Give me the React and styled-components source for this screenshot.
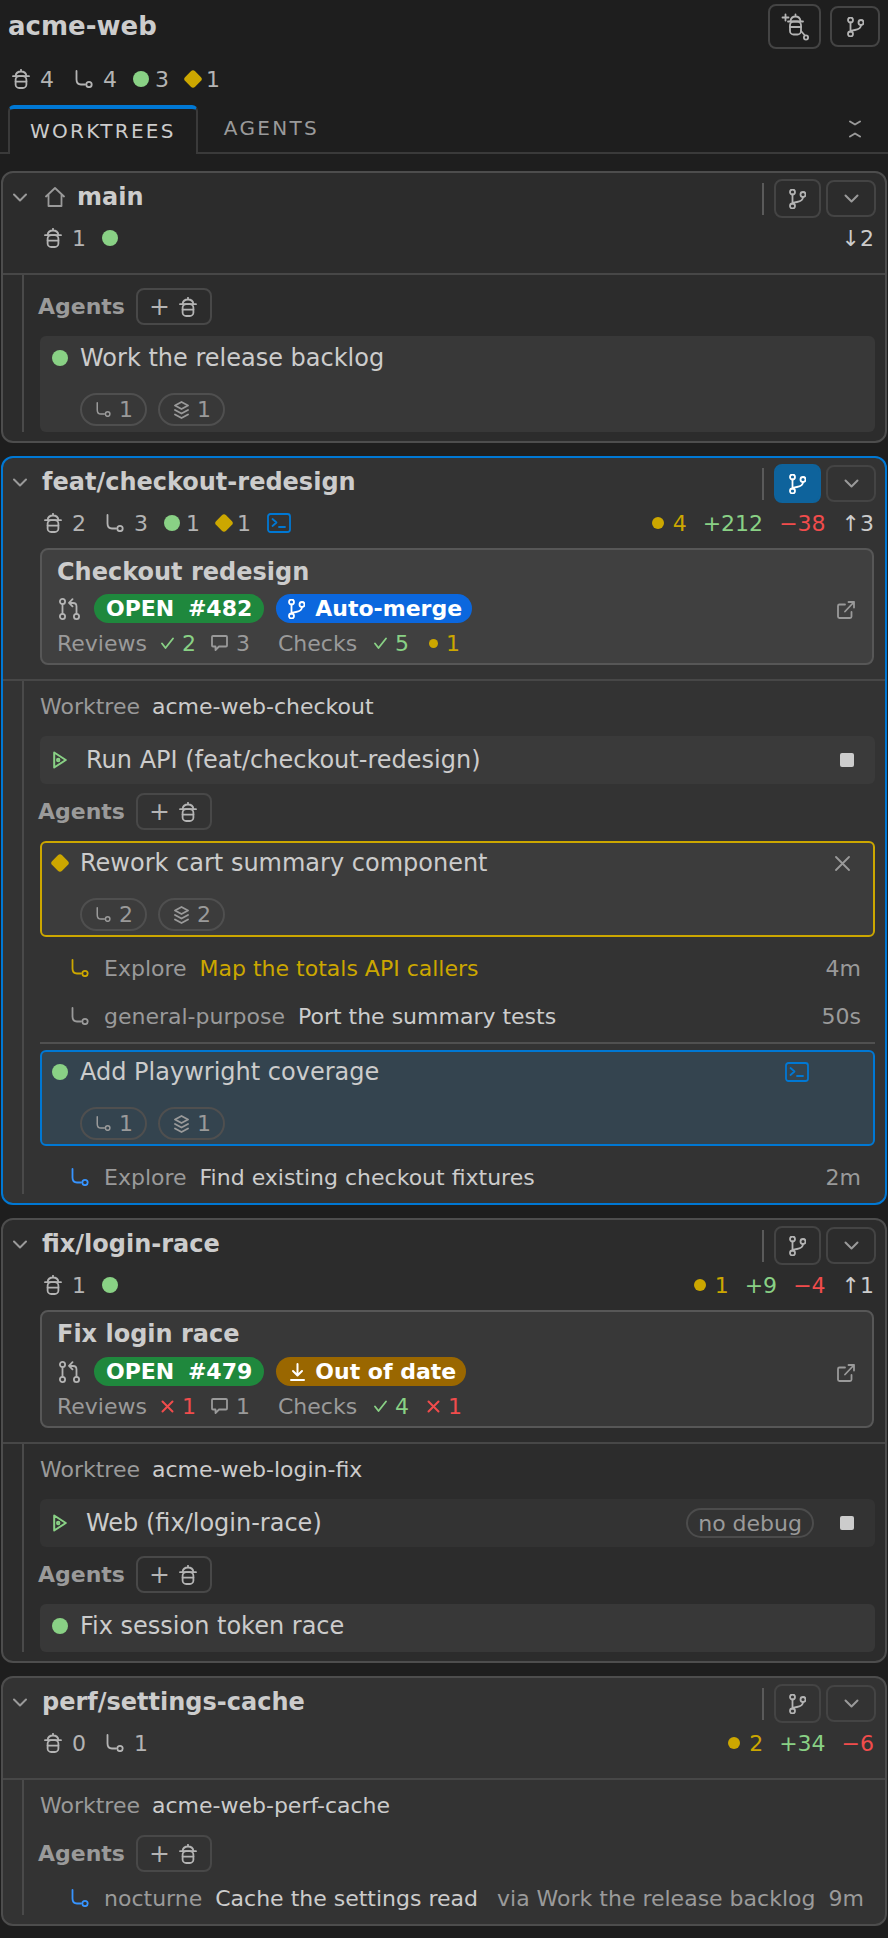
import React from 'react';
import styled, { createGlobalStyle } from 'styled-components';

const colors = {
  text: '#cccccc',
  soft: '#b4b4b4',
  muted: '#9a9a9a',
  green: '#89d185',
  yellow: '#cca700',
  red: '#f14c4c',
  blue: '#0078d4',
  link: '#3794ff',
  white: '#ffffff',
};

const GlobalStyle = createGlobalStyle`
  html, body {
    margin: 0;
    padding: 0;
    background: #1e1e1e;
  }
  body {
    color: #cccccc;
    font-family: "DejaVu Sans", sans-serif;
    font-size: 22px;
  }
  * {
    box-sizing: border-box;
  }
`;

const Glyph = styled.svg`
  display: block;
  flex: none;
  color: ${(p) => colors[p.$tone] || colors.soft};
  fill: none;
  stroke: currentColor;
  stroke-width: ${(p) => p.$weight || 1.8};
  stroke-linecap: round;
  stroke-linejoin: round;
`;

const AgentIcon = ({ tone }) => (
  <Glyph $tone={tone} width="18" height="20" viewBox="0 0 18 20">
    <path d="M9 .8v1.600M3.600 6.800C4 4 6 2.500 9 2.500s5 1.500 5.400 4.300M1 7.200h16" />
    <rect x="3.600" y="7.200" width="10.800" height="11.800" rx="3.600" />
    <path d="M3.600 12.600h10.800" />
  </Glyph>
);

const AddAgentIcon = () => (
  <Glyph width="28" height="28" viewBox="0 0 28 28">
    <path d="M4.500 1.500v6M1.500 4.500h6" />
    <path d="M14.500 1.500v2M9.500 8c.4-2.800 2.200-4.500 5-4.500s4.600 1.700 5 4.500M7 8.500h15" />
    <rect x="9" y="8.500" width="11" height="13" rx="3.600" />
    <path d="M9 14h11M20 18l3.500 4" />
    <circle cx="25" cy="24.500" r="2.100" />
  </Glyph>
);

const SubagentIcon = ({ tone, size = 18 }) => (
  <Glyph $tone={tone} width={size} height={size} viewBox="0 0 18 18">
    <path d="M1.500 1v8.500c0 3 1.800 5 4.500 5h4" />
    <circle cx="14" cy="14.500" r="2.700" />
  </Glyph>
);

const BranchIcon = ({ tone, size = 20 }) => (
  <Glyph $tone={tone} width={(size * 17) / 20} height={size} viewBox="0 0 17 20">
    <circle cx="3.500" cy="3" r="2.500" />
    <circle cx="3.500" cy="17" r="2.500" />
    <circle cx="14" cy="5.500" r="2.500" />
    <path d="M3.500 5.500v9M14 8c0 3.500-3 4.500-6 5-2.500.4-4.500 1-4.500 1.500" />
  </Glyph>
);

const PullRequestIcon = () => (
  <Glyph width="21" height="22" viewBox="0 0 21 22">
    <circle cx="3.500" cy="3.500" r="2.600" />
    <circle cx="3.500" cy="18.500" r="2.600" />
    <circle cx="17.500" cy="18.500" r="2.600" />
    <path d="M3.500 6.100v9.800M17.500 15.900V8.500c0-2.500-1.500-3.500-3.500-3.500h-3M13.500 1.200 10 4.800l3.500 3.600" />
  </Glyph>
);

const LayersIcon = () => (
  <Glyph $tone="muted" width="15" height="18" viewBox="0 0 15 18">
    <path d="M7.500 1 14 4.500 7.500 8 1 4.500zM1 9l6.500 3.500L14 9M1 13.500 7.500 17l6.500-3.500" />
  </Glyph>
);

const HomeIcon = () => (
  <Glyph $tone="muted" width="20" height="20" viewBox="0 0 20 20">
    <path d="M1 9.500 10 1l9 8.500M3.500 8v11h13V8" />
  </Glyph>
);

const TerminalIcon = () => (
  <Glyph $tone="blue" width="24" height="20" viewBox="0 0 24 20">
    <rect x="1" y="1" width="22" height="18" rx="2.500" />
    <path d="m5.500 6 4 3.500-4 3.500M12 14h6" />
  </Glyph>
);

const ExternalIcon = () => (
  <OffsetSlot>
    <Glyph $tone="muted" width="18" height="18" viewBox="0 0 18 18">
      <path d="M8 3.500H2.500a1.500 1.500 0 0 0-1.500 1.500v10.500A1.500 1.500 0 0 0 2.500 17H13a1.500 1.500 0 0 0 1.500-1.500V11M8 10.500 17 1M11.500 1H17v5.500" />
    </Glyph>
  </OffsetSlot>
);

const PlayIcon = () => (
  <Glyph $tone="green" $weight="2" width="14" height="18" viewBox="0 0 14 18">
    <path d="M1.200 1.500 12.800 9 1.200 16.500z" />
    <circle cx="5.200" cy="9" r="1.200" />
  </Glyph>
);

const CloseIcon = () => (
  <Glyph $tone="muted" width="15" height="15" viewBox="0 0 15 15">
    <path d="m1 1 13 13M14 1 1 14" />
  </Glyph>
);

const ChevronIcon = ({ width = 14 }) => (
  <Glyph $tone="muted" $weight="2" width={width} height="9" viewBox="0 0 14 9">
    <path d="m1 1.500 6 6 6-6" />
  </Glyph>
);

const FoldIcon = () => (
  <Glyph $tone="muted" $weight="2" width="12" height="18" viewBox="0 0 12 18">
    <path d="m1 1.500 5 3 5-3M1 16.500l5-3 5 3" />
  </Glyph>
);

const CheckIcon = () => (
  <Glyph $tone="green" width="13" height="12" viewBox="0 0 13 12">
    <path d="m1 6.500 3.500 4.500L12 1.500" />
  </Glyph>
);

const CrossIcon = () => (
  <Glyph $tone="red" $weight="2" width="13" height="13" viewBox="0 0 13 13">
    <path d="m1.500 1.500 10 10M11.500 1.500l-10 10" />
  </Glyph>
);

const CommentIcon = () => (
  <Glyph $tone="muted" width="17" height="16" viewBox="0 0 17 16">
    <path d="M2 1h13a1 1 0 0 1 1 1v8.500a1 1 0 0 1-1 1H8l-3.500 3.500v-3.500H2a1 1 0 0 1-1-1V2a1 1 0 0 1 1-1z" />
  </Glyph>
);

const DownloadIcon = () => (
  <Glyph $tone="white" $weight="2" width="15" height="18" viewBox="0 0 15 18">
    <path d="M7.500 1v11M3 8l4.500 4.500L12 8M1 17h13" />
  </Glyph>
);

const OffsetSlot = styled.span`
  display: flex;
  flex: none;
  margin-top: 7px;
`;

const Page = styled.div`
  width: 888px;
  height: 1938px;
  overflow: hidden;
`;

const TopBar = styled.div`
  display: flex;
  align-items: center;
  justify-content: space-between;
  height: 53px;
  padding: 0 8px;
`;

const RepoName = styled.h1`
  margin: 0 0 2px;
  font-size: 26px;
  font-weight: 700;
  color: ${colors.text};
`;

const ButtonGroup = styled.div`
  display: flex;
  align-items: center;
  gap: ${(p) => p.$gap || 5}px;
`;

const IconButton = styled.button`
  display: flex;
  align-items: center;
  justify-content: center;
  width: ${(p) => p.$w}px;
  height: ${(p) => p.$h}px;
  padding: 0;
  border: 2px solid ${(p) => (p.$active ? '#0e639c' : '#444444')};
  border-radius: 8px;
  background: ${(p) => (p.$active ? '#0e639c' : 'transparent')};
`;

const StatRow = styled.div`
  display: flex;
  align-items: center;
  gap: 16px;
  height: ${(p) => p.$h || 34}px;
  padding-left: ${(p) => p.$left || 0}px;
  color: ${colors.soft};
`;

const Stat = styled.span`
  display: inline-flex;
  align-items: center;
  gap: ${(p) => p.$gap || 10}px;
  margin-left: ${(p) => p.$offset || 0}px;
  color: ${(p) => colors[p.$tone] || 'inherit'};
`;

const Dot = styled.span`
  display: block;
  flex: none;
  width: ${(p) => p.$size || 16}px;
  height: ${(p) => p.$size || 16}px;
  border-radius: 50%;
  background: ${(p) => colors[p.$tone] || colors.green};
`;

const Diamond = styled.span`
  display: block;
  flex: none;
  width: 14px;
  height: 14px;
  margin: 0 1px;
  border-radius: 3px;
  background: ${colors.yellow};
  transform: rotate(45deg);
`;

const Tabs = styled.div`
  display: flex;
  align-items: stretch;
  height: 49px;
  padding-left: 8px;
  padding-right: 27px;
  border-bottom: 2px solid #3a3a3a;
`;

const Tab = styled.div`
  display: flex;
  align-items: center;
  padding: ${(p) => (p.$active ? '0 20px 2px 20px' : '0 26px 2px')};
  margin-bottom: ${(p) => (p.$active ? -2 : 0)}px;
  font-size: 20px;
  letter-spacing: 2.3px;
  color: ${(p) => (p.$active ? colors.text : colors.muted)};
  background: #1e1e1e;
  ${(p) =>
    p.$active &&
    `
    border: 2px solid #3a3a3a;
    border-top: 4px solid ${colors.blue};
    border-bottom: 0;
    border-radius: 6px 6px 0 0;
  `}
`;

const TabSpacer = styled.div`
  display: flex;
  flex: 1;
  align-items: center;
  justify-content: flex-end;
`;

const WorktreeList = styled.div`
  display: flex;
  flex-direction: column;
  gap: 13px;
  padding: 17px 1px 0;
`;

const Worktree = styled.section`
  border: 2px solid ${(p) => (p.$selected ? colors.blue : '#4d4d4d')};
  border-radius: 12px;
  background: ${(p) => (p.$raised ? '#333333' : '#2c2c2c')};
`;

const Head = styled.div`
  padding: 3px 9px 14px 0;
`;

const HeadRow = styled.div`
  display: flex;
  align-items: center;
  height: 42px;
  margin-bottom: 3px;
  padding-left: 10px;
`;

const Branch = styled.h2`
  display: flex;
  flex: 1;
  align-items: center;
  gap: 12px;
  margin: 0 0 0 ${(p) => (p.$home ? 18 : 15)}px;
  font-size: 24px;
  font-weight: 700;
  color: ${colors.text};
`;

const HeadRule = styled.span`
  width: 2px;
  height: 32px;
  margin-top: 3px;
  margin-right: 10px;
  background: #5a5a5a;
`;

const HeadActions = styled(ButtonGroup)`
  margin-top: 3px;
`;

const MetaRow = styled.div`
  display: flex;
  align-items: center;
  justify-content: space-between;
  margin-bottom: 4px;
  padding-right: 2px;
`;

const Changes = styled(StatRow)`
  gap: 16px;
  color: ${colors.text};
`;

const PrBox = styled.div`
  display: flex;
  align-items: center;
  height: ${(p) => p.$h || 117}px;
  margin: 8px 2px 0 37px;
  padding: 0 17px 0 15px;
  border: 2px solid #575757;
  border-radius: 8px;
  background: ${(p) => (p.$raised ? '#404040' : '#383838')};
`;

const PrMain = styled.div`
  display: flex;
  flex: 1;
  flex-direction: column;
  align-self: flex-start;
  padding-top: 6px;
`;

const PrTitle = styled.div`
  font-size: 24px;
  font-weight: 700;
  line-height: 32px;
  color: ${colors.text};
`;

const BadgeRow = styled.div`
  display: flex;
  align-items: center;
  gap: 12px;
  margin-top: ${(p) => (p.$tall ? 7 : 6)}px;
  padding-left: 2px;
`;

const PrIconSlot = styled.span`
  display: flex;
  margin-right: 2px;
`;

const Badge = styled.span`
  display: inline-flex;
  align-items: center;
  gap: 10px;
  height: 29px;
  padding: 0 ${(p) => (p.$left ? 10 : 12)}px 0 ${(p) => p.$left || 12}px;
  border-radius: 15px;
  font-size: 22px;
  font-weight: 700;
  word-spacing: ${(p) => p.$words || 0}px;
  color: #ffffff;
  background: ${(p) => p.$bg};
`;

const ReviewRow = styled.div`
  display: flex;
  align-items: center;
  height: 30px;
  margin-top: 5px;
  color: ${colors.muted};
`;

const ReviewGroup = styled.div`
  display: flex;
  align-items: center;
  gap: 8px;
  margin-right: ${(p) => p.$after || 0}px;
`;

const Body = styled.div`
  padding: 0 10px 9px 0;
  border-top: 2px solid #474747;
`;

const Section = styled.div`
  display: flex;
  flex-direction: column;
  margin-left: 19px;
  padding-top: 13px;
  padding-left: 16px;
  border-left: 2px solid #4a4a4a;
`;

const WorktreePath = styled.div`
  display: flex;
  align-items: center;
  gap: 12px;
  height: 24px;
  margin-bottom: 18px;
  color: ${colors.text};
`;

const Muted = styled.span`
  white-space: nowrap;
  color: ${colors.muted};
`;

const Via = styled(Muted)`
  margin-left: 6px;
`;

const RunRow = styled.div`
  display: flex;
  align-items: center;
  height: 48px;
  margin-bottom: 9px;
  padding: 0 21px 0 13px;
  border-radius: 6px;
  font-size: 24px;
  color: ${colors.text};
  background: ${(p) => (p.$raised ? '#3a3a3a' : '#333333')};
`;

const RunName = styled.span`
  flex: 1;
  margin-left: 19px;
`;

const StopSquare = styled.span`
  width: 14px;
  height: 14px;
  border-radius: 2px;
  background: #cccccc;
`;

const Tag = styled.span`
  display: flex;
  align-items: center;
  height: 30px;
  margin-right: 26px;
  padding: 0 10px;
  border: 2px solid #4c4c4c;
  border-radius: 15px;
  font-size: 22px;
  color: ${colors.muted};
`;

const AgentsBar = styled.div`
  display: flex;
  align-items: center;
  gap: 11px;
  height: 37px;
  margin-bottom: 11px;
  margin-left: -2px;
`;

const AgentsLabel = styled.span`
  font-weight: 700;
  color: ${colors.muted};
`;

const AddButton = styled.button`
  display: flex;
  align-items: center;
  gap: 9px;
  width: 76px;
  height: 37px;
  padding: 0 0 0 11px;
  border: 2px solid #484848;
  border-radius: 8px;
  font-family: inherit;
  font-size: 25px;
  font-weight: 400;
  line-height: 1;
  color: ${colors.soft};
  background: transparent;
`;

const AgentCard = styled.div`
  padding: 0 10px 4px 10px;
  border: 2px solid ${(p) => (p.$state === 'waiting' ? colors.yellow : p.$state === 'focused' ? colors.blue : 'transparent')};
  border-radius: 6px;
  background: ${(p) => (p.$state === 'focused' ? '#34444f' : p.$state === 'waiting' ? '#3c3c3c' : '#383838')};
`;

const AgentTitle = styled.div`
  display: flex;
  align-items: center;
  gap: 12px;
  height: 40px;
  font-size: 24px;
  color: ${colors.text};
`;

const AgentName = styled.span`
  flex: 1;
`;

const CardAction = styled.span`
  display: flex;
  margin-right: ${(p) => p.$right}px;
`;

const PillRow = styled.div`
  display: flex;
  gap: 11px;
  margin-top: 15px;
  padding-left: 28px;
`;

const Pill = styled.span`
  display: inline-flex;
  align-items: center;
  gap: 8px;
  height: 33px;
  padding: 0 12px 0 14px;
  border: 2px solid #4f4f4f;
  border-radius: 17px;
  color: ${colors.muted};
`;

const SubList = styled.div`
  display: flex;
  flex-direction: column;
  gap: 18px;
  ${AgentCard} + & {
    margin-top: 16px;
  }
  &:last-child {
    margin-bottom: 2px;
  }
`;

const SubRow = styled.div`
  display: flex;
  align-items: center;
  gap: 13px;
  height: 30px;
  padding: 0 14px 0 31px;
  white-space: nowrap;
  color: ${colors.text};
  svg {
    margin-right: 2px;
  }
`;

const SubTitle = styled.span`
  color: ${(p) => colors[p.$tone] || colors.text};
`;

const SubTime = styled.span`
  margin-left: auto;
  color: ${colors.muted};
`;

const CardRule = styled.div`
  height: 2px;
  margin: 11px 0 6px;
  background: #505050;
`;

const AgentsHeader = () => (
  <AgentsBar>
    <AgentsLabel>Agents</AgentsLabel>
    <AddButton>
      +
      <AgentIcon />
    </AddButton>
  </AgentsBar>
);

const HeadButtons = ({ active }) => (
  <>
    <HeadRule />
    <HeadActions>
      <IconButton $w={47} $h={39} $active={active}>
        <BranchIcon tone={active ? 'white' : 'soft'} />
      </IconButton>
      <IconButton $w={50} $h={37}>
        <ChevronIcon width={15} />
      </IconButton>
    </HeadActions>
  </>
);

const AgentPills = ({ subagents, layers }) => (
  <PillRow>
    <Pill>
      <SubagentIcon tone="muted" size={15} />
      {subagents}
    </Pill>
    <Pill>
      <LayersIcon />
      {layers}
    </Pill>
  </PillRow>
);

const App = () => (
  <Page>
    <GlobalStyle />
    <TopBar>
      <RepoName>acme-web</RepoName>
      <ButtonGroup $gap={9}>
        <IconButton $w={53} $h={45}>
          <AddAgentIcon />
        </IconButton>
        <IconButton $w={50} $h={41}>
          <BranchIcon />
        </IconButton>
      </ButtonGroup>
    </TopBar>
    <StatRow $h={52} $left={12}>
      <Stat><AgentIcon />4</Stat>
      <Stat $offset={5}><SubagentIcon />4</Stat>
      <Stat $gap={6}><Dot />3</Stat>
      <Stat $gap={5}><Diamond />1</Stat>
    </StatRow>
    <Tabs>
      <Tab $active>WORKTREES</Tab>
      <Tab>AGENTS</Tab>
      <TabSpacer><FoldIcon /></TabSpacer>
    </Tabs>

    <WorktreeList>
      <Worktree>
        <Head>
          <HeadRow>
            <ChevronIcon />
            <Branch $home><HomeIcon />main</Branch>
            <HeadButtons />
          </HeadRow>
          <MetaRow>
            <StatRow $left={41}>
              <Stat><AgentIcon />1</Stat>
              <Dot />
            </StatRow>
            <Changes>
              <Stat $gap={0}>↓2</Stat>
            </Changes>
          </MetaRow>
        </Head>
        <Body>
          <Section>
            <AgentsHeader />
            <AgentCard>
              <AgentTitle><Dot /><AgentName>Work the release backlog</AgentName></AgentTitle>
              <AgentPills subagents={1} layers={1} />
            </AgentCard>
          </Section>
        </Body>
      </Worktree>

      <Worktree $selected $raised>
        <Head>
          <HeadRow>
            <ChevronIcon />
            <Branch>feat/checkout-redesign</Branch>
            <HeadButtons active />
          </HeadRow>
          <MetaRow>
            <StatRow $left={41}>
              <Stat><AgentIcon />2</Stat>
              <Stat $offset={4}><SubagentIcon />3</Stat>
              <Stat $gap={6}><Dot />1</Stat>
              <Stat $gap={5}><Diamond />1</Stat>
              <TerminalIcon />
            </StatRow>
            <Changes>
              <Stat $gap={9} $tone="yellow"><Dot $size={12} $tone="yellow" />4</Stat>
              <Stat $tone="green">+212</Stat>
              <Stat $tone="red">−38</Stat>
              <Stat>↑3</Stat>
            </Changes>
          </MetaRow>
          <PrBox $raised>
            <PrMain>
              <PrTitle>Checkout redesign</PrTitle>
              <BadgeRow>
                <PrIconSlot><PullRequestIcon /></PrIconSlot>
                <Badge $bg="#1f883d" $words={6}>OPEN #482</Badge>
                <Badge $bg="#0b67de" $left={12}><BranchIcon tone="white" size={20} />Auto-merge</Badge>
              </BadgeRow>
              <ReviewRow>
                <ReviewGroup $after={14}>Reviews</ReviewGroup>
                <ReviewGroup $after={15}><CheckIcon /><Stat $tone="green">2</Stat></ReviewGroup>
                <ReviewGroup $after={28}><CommentIcon />3</ReviewGroup>
                <ReviewGroup $after={17}>Checks</ReviewGroup>
                <ReviewGroup $after={20}><CheckIcon /><Stat $tone="green">5</Stat></ReviewGroup>
                <ReviewGroup><Dot $size={9} $tone="yellow" /><Stat $tone="yellow">1</Stat></ReviewGroup>
              </ReviewRow>
            </PrMain>
            <ExternalIcon />
          </PrBox>
        </Head>
        <Body>
          <Section>
            <WorktreePath><Muted>Worktree</Muted>acme-web-checkout</WorktreePath>
            <RunRow $raised>
              <PlayIcon />
              <RunName>Run API (feat/checkout-redesign)</RunName>
              <StopSquare />
            </RunRow>
            <AgentsHeader />
            <AgentCard $state="waiting">
              <AgentTitle>
                <Diamond />
                <AgentName>Rework cart summary component</AgentName>
                <CardAction $right={13}><CloseIcon /></CardAction>
              </AgentTitle>
              <AgentPills subagents={2} layers={2} />
            </AgentCard>
            <SubList>
              <SubRow>
                <SubagentIcon tone="yellow" />
                <Muted>Explore</Muted>
                <SubTitle $tone="yellow">Map the totals API callers</SubTitle>
                <SubTime>4m</SubTime>
              </SubRow>
              <SubRow>
                <SubagentIcon tone="muted" />
                <Muted>general-purpose</Muted>
                <SubTitle>Port the summary tests</SubTitle>
                <SubTime>50s</SubTime>
              </SubRow>
            </SubList>
            <CardRule />
            <AgentCard $state="focused">
              <AgentTitle>
                <Dot />
                <AgentName>Add Playwright coverage</AgentName>
                <CardAction $right={54}><TerminalIcon /></CardAction>
              </AgentTitle>
              <AgentPills subagents={1} layers={1} />
            </AgentCard>
            <SubList>
              <SubRow>
                <SubagentIcon tone="link" />
                <Muted>Explore</Muted>
                <SubTitle>Find existing checkout fixtures</SubTitle>
                <SubTime>2m</SubTime>
              </SubRow>
            </SubList>
          </Section>
        </Body>
      </Worktree>

      <Worktree>
        <Head>
          <HeadRow>
            <ChevronIcon />
            <Branch>fix/login-race</Branch>
            <HeadButtons />
          </HeadRow>
          <MetaRow>
            <StatRow $left={41}>
              <Stat><AgentIcon />1</Stat>
              <Dot />
            </StatRow>
            <Changes>
              <Stat $gap={9} $tone="yellow"><Dot $size={12} $tone="yellow" />1</Stat>
              <Stat $tone="green">+9</Stat>
              <Stat $tone="red">−4</Stat>
              <Stat>↑1</Stat>
            </Changes>
          </MetaRow>
          <PrBox $h={118}>
            <PrMain>
              <PrTitle>Fix login race</PrTitle>
              <BadgeRow $tall>
                <PrIconSlot><PullRequestIcon /></PrIconSlot>
                <Badge $bg="#1f883d" $words={6}>OPEN #479</Badge>
                <Badge $bg="#9a6700" $left={14}><DownloadIcon />Out of date</Badge>
              </BadgeRow>
              <ReviewRow>
                <ReviewGroup $after={14}>Reviews</ReviewGroup>
                <ReviewGroup $after={15}><CrossIcon /><Stat $tone="red">1</Stat></ReviewGroup>
                <ReviewGroup $after={28}><CommentIcon />1</ReviewGroup>
                <ReviewGroup $after={17}>Checks</ReviewGroup>
                <ReviewGroup $after={18}><CheckIcon /><Stat $tone="green">4</Stat></ReviewGroup>
                <ReviewGroup><CrossIcon /><Stat $tone="red">1</Stat></ReviewGroup>
              </ReviewRow>
            </PrMain>
            <ExternalIcon />
          </PrBox>
        </Head>
        <Body>
          <Section>
            <WorktreePath><Muted>Worktree</Muted>acme-web-login-fix</WorktreePath>
            <RunRow>
              <PlayIcon />
              <RunName>Web (fix/login-race)</RunName>
              <Tag>no debug</Tag>
              <StopSquare />
            </RunRow>
            <AgentsHeader />
            <AgentCard>
              <AgentTitle><Dot /><AgentName>Fix session token race</AgentName></AgentTitle>
            </AgentCard>
          </Section>
        </Body>
      </Worktree>

      <Worktree $raised>
        <Head>
          <HeadRow>
            <ChevronIcon />
            <Branch>perf/settings-cache</Branch>
            <HeadButtons />
          </HeadRow>
          <MetaRow>
            <StatRow $left={41}>
              <Stat><AgentIcon />0</Stat>
              <Stat $offset={4}><SubagentIcon />1</Stat>
            </StatRow>
            <Changes>
              <Stat $gap={9} $tone="yellow"><Dot $size={12} $tone="yellow" />2</Stat>
              <Stat $tone="green">+34</Stat>
              <Stat $tone="red">−6</Stat>
            </Changes>
          </MetaRow>
        </Head>
        <Body>
          <Section>
            <WorktreePath><Muted>Worktree</Muted>acme-web-perf-cache</WorktreePath>
            <AgentsHeader />
            <SubList>
              <SubRow>
                <SubagentIcon tone="link" />
                <Muted>nocturne</Muted>
                <SubTitle>Cache the settings read</SubTitle>
                <Via>via Work the release backlog</Via>
                <SubTime>9m</SubTime>
              </SubRow>
            </SubList>
          </Section>
        </Body>
      </Worktree>
    </WorktreeList>
  </Page>
);

export default App;
